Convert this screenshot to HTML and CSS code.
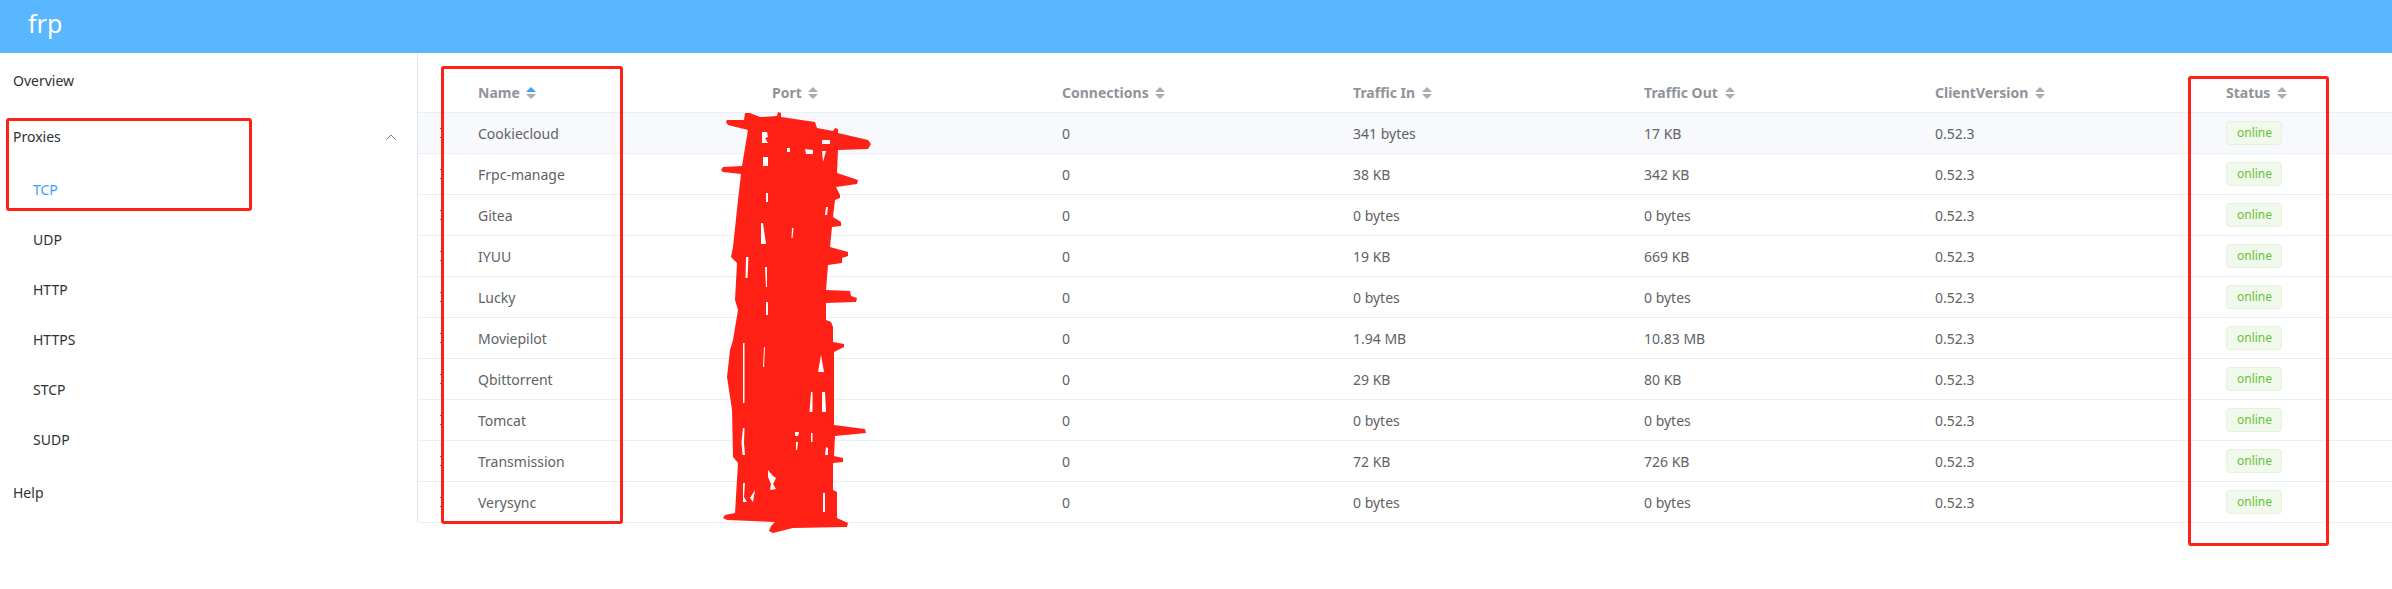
FILE: index.html
```html
<!DOCTYPE html>
<html lang="en">
<head>
  <meta charset="UTF-8" />
  <title>frp</title>
  <meta name="viewport" content="width=device-width, initial-scale=1.0">
  <link rel="stylesheet" href="styles.css">
</head>
<body>

  <header class="topbar">
    <span class="brand">frp</span>
  </header>

  <div class="layout">
    <nav class="sidebar">
      <div class="menu-item">Overview</div>
      <div class="menu-item menu-open">
        Proxies
        <svg class="chevron" width="12" height="8" viewBox="0 0 12 8"><path d="M1.5 6.500 6 2l4.500 4.500" fill="none" stroke="#7a8088" stroke-width="1"/></svg>
      </div>
      <div class="sub-item active">TCP</div>
      <div class="sub-item">UDP</div>
      <div class="sub-item">HTTP</div>
      <div class="sub-item">HTTPS</div>
      <div class="sub-item">STCP</div>
      <div class="sub-item">SUDP</div>
      <div class="menu-item">Help</div>
    </nav>

    <main class="content">
      <table class="proxy-table">
        <colgroup>
          <col class="col-expand">
          <col class="col-name">
          <col class="col-port">
          <col class="col-std">
          <col class="col-std">
          <col class="col-std">
          <col class="col-std">
          <col class="col-status">
        </colgroup>
        <thead>
          <tr>
            <th></th>
            <th>Name <span class="sort sorted"></span></th>
            <th>Port <span class="sort"></span></th>
            <th>Connections <span class="sort"></span></th>
            <th>Traffic In <span class="sort"></span></th>
            <th>Traffic Out <span class="sort"></span></th>
            <th>ClientVersion <span class="sort"></span></th>
            <th>Status <span class="sort"></span></th>
          </tr>
        </thead>
        <tbody>
          <tr class="hovered"><td><i class="expand"></i></td><td>Cookiecloud</td><td></td><td>0</td><td>341 bytes</td><td>17 KB</td><td>0.52.3</td><td><span class="tag">online</span></td></tr>
          <tr><td><i class="expand"></i></td><td>Frpc-manage</td><td></td><td>0</td><td>38 KB</td><td>342 KB</td><td>0.52.3</td><td><span class="tag">online</span></td></tr>
          <tr><td><i class="expand"></i></td><td>Gitea</td><td></td><td>0</td><td>0 bytes</td><td>0 bytes</td><td>0.52.3</td><td><span class="tag">online</span></td></tr>
          <tr><td><i class="expand"></i></td><td>IYUU</td><td></td><td>0</td><td>19 KB</td><td>669 KB</td><td>0.52.3</td><td><span class="tag">online</span></td></tr>
          <tr><td><i class="expand"></i></td><td>Lucky</td><td></td><td>0</td><td>0 bytes</td><td>0 bytes</td><td>0.52.3</td><td><span class="tag">online</span></td></tr>
          <tr><td><i class="expand"></i></td><td>Moviepilot</td><td></td><td>0</td><td>1.94 MB</td><td>10.83 MB</td><td>0.52.3</td><td><span class="tag">online</span></td></tr>
          <tr><td><i class="expand"></i></td><td>Qbittorrent</td><td></td><td>0</td><td>29 KB</td><td>80 KB</td><td>0.52.3</td><td><span class="tag">online</span></td></tr>
          <tr><td><i class="expand"></i></td><td>Tomcat</td><td></td><td>0</td><td>0 bytes</td><td>0 bytes</td><td>0.52.3</td><td><span class="tag">online</span></td></tr>
          <tr><td><i class="expand"></i></td><td>Transmission</td><td></td><td>0</td><td>72 KB</td><td>726 KB</td><td>0.52.3</td><td><span class="tag">online</span></td></tr>
          <tr><td><i class="expand"></i></td><td>Verysync</td><td></td><td>0</td><td>0 bytes</td><td>0 bytes</td><td>0.52.3</td><td><span class="tag">online</span></td></tr>
        </tbody>
      </table>
    </main>
  </div>

  <!-- red markup drawn over the screenshot -->
  <div class="mark mark-proxies"></div>
  <div class="mark mark-name"></div>
  <div class="mark mark-status"></div>
  <svg class="scribble" width="2392" height="589" viewBox="0 0 2392 589">
    <path class="scribble-fill" d="M727 120 L744 120 L745 113 L750 113 L760 117 L777 116 L778 112 L781 113 L781 117 L815 122 L817 128 L833 131 L835 128 L838 129 L838 133 L868 140 L871 144 L868 149 L838 150 L837 173 L858 180 L857 184 L836 187 L840 195 L840 198 L835 200 L833 217 L841 222 L841 226 L832 227 L830 247 L848 252 L848 256 L842 258 L842 263 L828 265 L826 290 L850 291 L851 296 L857 298 L856 302 L826 303 L826 320 L831 322 L833 327 L833 342 L844 344 L844 347 L834 352 L834 425 L865 429 L866 433 L835 436 L834 456 L843 458 L843 462 L833 463 L833 490 L837 492 L837 518 L848 523 L847 527 L793 528 L773 533 L769 531 L771 526 L775 522 L727 520 L723 518 L725 515 L735 513 L738 463 L733 457 L732 410 L727 377 L730 350 L733 340 L738 310 L735 300 L737 263 L731 257 L733 247 L738 200 L741 174 L723 172 L721 170 L723 167 L742 166 L748 130 L728 125 L726 122 Z"/>
    <path class="scribble-gap" d="M762 132h5l1 5-3 1 3 5h-6z"/>
    <path class="scribble-gap" d="M763 157h5v9h-5z"/>
    <path class="scribble-gap" d="M766 193h2v9h-2z"/>
    <path class="scribble-gap" d="M761 223h2l3 21h-5z"/>
    <path class="scribble-gap" d="M792 228h1.500l-1 10h-1z"/>
    <path class="scribble-gap" d="M746 257h2.500l-1 21h-2z"/>
    <path class="scribble-gap" d="M765 267h2v20h-1z"/>
    <path class="scribble-gap" d="M766 302h2v13h-2z"/>
    <path class="scribble-gap" d="M822 140h8v4h-8z"/>
    <path class="scribble-gap" d="M805 149l8 1 0 4-7 0z"/>
    <path class="scribble-gap" d="M787 148h3v4h-3z"/>
    <path class="scribble-gap" d="M822 151h4l-3 11z"/>
    <path class="scribble-gap" d="M826 207h2l-1 8h-2z"/>
    <path class="scribble-gap" d="M743 343h1.500v60h-1.500z"/>
    <path class="scribble-gap" d="M764 347h1l-1 20h-1z"/>
    <path class="scribble-gap" d="M821 355l3 17h-6z"/>
    <path class="scribble-gap" d="M811 392h1.500v20h-3z"/>
    <path class="scribble-gap" d="M822 392h3l1 20h-4z"/>
    <path class="scribble-gap" d="M743 428h1.500l-.5 15 1 12h-2.500l-1-13z"/>
    <path class="scribble-gap" d="M795 432h4l-1 4h-3zM796 442h2l-1 8h-1z"/>
    <path class="scribble-gap" d="M811 433h1.500v9h-1.500z"/>
    <path class="scribble-gap" d="M826 447l2 1v7h-3z"/>
    <path class="scribble-gap" d="M768 470l5 6 3 2-3 6 3 5-6 1 1-6-3-7z"/>
    <path class="scribble-gap" d="M743 483h2l-1 14 3 5-4 0z"/>
    <path class="scribble-gap" d="M755 490l-2 12-3-4z"/>
    <path class="scribble-gap" d="M823 493h2v19h-2z"/>
  </svg>

</body>
</html>
```

FILE: styles.css
```css
* {
  box-sizing: border-box;
}
body {
  margin: 0;
  background: #fff;
  font-family: "Noto Sans", "Open Sans", sans-serif;
  font-size: 14px;
  color: #303133;
  overflow: hidden;
}
.topbar {
  height: 53px;
  background: #58b7ff;
  padding-left: 28px;
  display: flex;
  align-items: center;
}
.brand {
  color: #fff;
  font-size: 25px;
  margin-top: -8px;
}
.layout {
  display: flex;
  align-items: flex-start;
}
.sidebar {
  width: 418px;
  height: 469px;
  flex-shrink: 0;
  border-right: 1px solid #dfe3ea;
}
.menu-item {
  height: 56px;
  line-height: 56px;
  padding-left: 13px;
  position: relative;
}
.menu-item .chevron {
  position: absolute;
  right: 20px;
  top: 24px;
}
.sub-item {
  height: 50px;
  line-height: 50px;
  padding-left: 33px;
}
.sub-item.active {
  color: #409eff;
}
.content {
  flex: 1;
  min-width: 0;
}
.proxy-table {
  width: 1974px;
  table-layout: fixed;
  border-collapse: collapse;
  margin-top: 21px;
}
.col-expand {
  width: 48px;
}
.col-name {
  width: 294px;
}
.col-port {
  width: 290px;
}
.col-std {
  width: 291px;
}
.col-status {
  width: 178px;
}
th {
  height: 38px;
  padding: 0 0 0 12px;
  text-align: left;
  font-weight: bold;
  color: #909399;
  border-bottom: 1px solid #ebeef5;
  white-space: nowrap;
}
td {
  height: 41px;
  padding: 1px 0 0 12px;
  color: #606266;
  border-bottom: 1px solid #ebeef5;
  white-space: nowrap;
}
.hovered td {
  background: #f8f9fc;
}
.sort {
  display: inline-block;
  position: relative;
  width: 10px;
  height: 12px;
  margin-left: 3px;
  vertical-align: -1px;
}
.sort::before,
.sort::after {
  content: "";
  position: absolute;
  left: 0;
  border-left: 5px solid transparent;
  border-right: 5px solid transparent;
}
.sort::before {
  top: 0;
  border-bottom: 5px solid #a9adb5;
}
.sort::after {
  bottom: 0;
  border-top: 5px solid #a9adb5;
}
.sort.sorted::before {
  border-bottom-color: #409eff;
}
.expand {
  display: block;
  width: 1px;
  height: 10px;
  margin-left: 10px;
  border-top: 1px solid #606266;
  border-bottom: 1px solid #606266;
}
.tag {
  display: inline-block;
  height: 24px;
  line-height: 22px;
  padding: 0 9px 0 10px;
  font-size: 12px;
  color: #67c23a;
  background: #f0f9eb;
  border: 1px solid #e1f3d8;
  border-radius: 4px;
}
.mark {
  position: absolute;
  border: 3px solid #ff2116;
  border-radius: 3px;
}
.mark-proxies {
  left: 6px;
  top: 118px;
  width: 246px;
  height: 93px;
}
.mark-name {
  left: 441px;
  top: 66px;
  width: 182px;
  height: 458px;
}
.mark-status {
  left: 2188px;
  top: 76px;
  width: 141px;
  height: 470px;
}
.scribble {
  position: absolute;
  left: 0;
  top: 0;
}
.scribble-fill {
  fill: #ff2116;
}
.scribble-gap {
  fill: #fff;
}
```
